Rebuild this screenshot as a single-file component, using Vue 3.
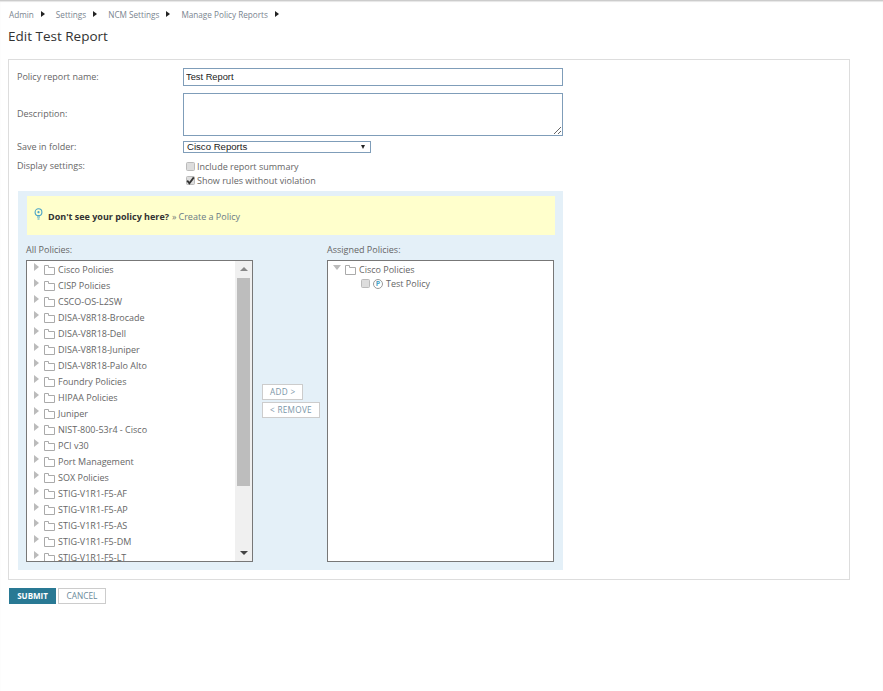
<script setup>
const crumbs = ['Admin', 'Settings', 'NCM Settings', 'Manage Policy Reports']
const policies = ['Cisco Policies', 'CISP Policies', 'CSCO-OS-L2SW', 'DISA-V8R18-Brocade', 'DISA-V8R18-Dell', 'DISA-V8R18-Juniper', 'DISA-V8R18-Palo Alto', 'Foundry Policies', 'HIPAA Policies', 'Juniper', 'NIST-800-53r4 - Cisco', 'PCI v30', 'Port Management', 'SOX Policies', 'STIG-V1R1-F5-AF', 'STIG-V1R1-F5-AP', 'STIG-V1R1-F5-AS', 'STIG-V1R1-F5-DM', 'STIG-V1R1-F5-LT']
</script>

<template>
  <div class="page">
    <nav class="crumbs">
      <span v-for="c in crumbs" :key="c" class="crumb">{{ c }}<i class="crumb-arrow"></i></span>
    </nav>
    <h1 class="title">Edit Test Report</h1>
    <section class="panel">
      <div class="row row-name">
        <label class="label">Policy report name:</label>
        <input class="field name" value="Test Report" />
      </div>
      <div class="row row-desc">
        <label class="label label-desc">Description:</label>
        <textarea class="field desc"></textarea>
      </div>
      <div class="row row-folder">
        <label class="label">Save in folder:</label>
        <div class="select">Cisco Reports<i class="select-caret"></i></div>
      </div>
      <div class="row row-display">
        <label class="label">Display settings:</label>
        <div class="checks">
          <div class="check"><span class="box"></span>Include report summary</div>
          <div class="check">
            <span class="box">
              <svg width="9" height="9" viewBox="0 0 9 9"><path d="M1.2 4.6 3.4 7.2 7.8 1.4" fill="none" stroke="#333" stroke-width="1.8" /></svg>
            </span>Show rules without violation
          </div>
        </div>
      </div>
      <div class="chooser">
        <div class="hint">
          <svg class="bulb" width="9" height="12" viewBox="0 0 9 12">
            <circle cx="4.5" cy="4.2" r="3.4" fill="none" stroke="#4aa3c7" stroke-width="1.1" />
            <circle cx="4.5" cy="4.2" r="1.1" fill="#4aa3c7" />
            <path d="M3 9h3M3.5 11h2" stroke="#4aa3c7" stroke-width="1" />
          </svg>
          <b>Don't see your policy here?</b><span class="raquo">»</span><span class="hint-link">Create a Policy</span>
        </div>
        <div class="columns">
          <div class="col">
            <div class="col-label">All Policies:</div>
            <div class="list">
              <div class="tree">
                <div v-for="p in policies" :key="p" class="node">
                  <i class="tri"></i>
                  <svg class="folder" width="11" height="10" viewBox="0 0 11 10"><path d="M.5 9.5V.5h4v2h6v7z" fill="#fff" stroke="#aaa" /></svg>
                  <span>{{ p }}</span>
                </div>
              </div>
              <div class="scrollbar">
                <i class="arrow-up"></i>
                <div class="track"><div class="thumb"></div></div>
                <i class="arrow-down"></i>
              </div>
            </div>
          </div>
          <div class="moves">
            <button class="move">ADD &gt;</button>
            <button class="move">&lt; REMOVE</button>
          </div>
          <div class="col">
            <div class="col-label">Assigned Policies:</div>
            <div class="list">
              <div class="tree">
                <div class="node">
                  <i class="tri-open"></i>
                  <svg class="folder" width="11" height="10" viewBox="0 0 11 10"><path d="M.5 9.5V.5h4v2h6v7z" fill="#fff" stroke="#aaa" /></svg>
                  <span>Cisco Policies</span>
                </div>
                <div class="leaf">
                  <span class="box leaf-box"></span>
                  <span class="p-icon">P</span>
                  <span>Test Policy</span>
                </div>
              </div>
            </div>
          </div>
        </div>
      </div>
    </section>
    <div class="actions">
      <button class="submit">SUBMIT</button>
      <button class="cancel">CANCEL</button>
    </div>
  </div>
</template>

<style>
html, body { margin: 0; background: #fff; }
</style>

<style scoped>
.page {
  height: 691px;
  box-sizing: border-box;
  overflow: hidden;
  font-family: "Open Sans", "DejaVu Sans", sans-serif;
  font-size: 9px;
  color: #666;
  border-top: 1px solid #ccc;
  box-shadow: inset 0 1px 1px #e6e6e6;
  padding: 0 33px 0 8px;
}
.crumbs {
  display: flex;
  gap: 11px;
  height: 25px;
  align-items: center;
  padding: 1px 0 0 1px;
  box-sizing: border-box;
  font-size: 8.2px;
  color: #7a8590;
}
.crumb { display: flex; align-items: center; gap: 7px; white-space: nowrap; }
.crumb-arrow {
  width: 0; height: 0;
  border-left: 4px solid #222;
  border-top: 3px solid transparent;
  border-bottom: 3px solid transparent;
}
.title {
  margin: 0;
  height: 33px;
  font-size: 13.5px;
  line-height: 21px;
  font-weight: 400;
  color: #333;
}
.panel {
  width: 842px;
  height: 521px;
  box-sizing: border-box;
  border: 1px solid #ddd;
  padding: 8px 9px 0 8px;
}
.row { display: flex; }
.label { width: 166px; flex: none; color: #666; line-height: 18px; }
.row-name { height: 25px; }
.row-desc { height: 48px; }
.label-desc { padding-top: 12px; }
.row-folder { height: 12px; margin-bottom: 4px; align-items: center; }
.row-display { height: 34px; }
.field {
  box-sizing: border-box;
  width: 380px;
  margin: 0;
  border: 1px solid #7f9db9;
  border-radius: 0;
  outline: none;
  font-family: "Liberation Sans", Arial, sans-serif;
  font-size: 9.3px;
  color: #222;
  background: #fff;
}
.name { height: 18px; padding: 0 2px; }
.desc { height: 43px; display: block; resize: both; }
.select {
  position: relative;
  box-sizing: border-box;
  width: 188px;
  height: 12px;
  border: 1px solid #7f9db9;
  padding-left: 3px;
  font-family: "Liberation Sans", Arial, sans-serif;
  font-size: 9.6px;
  line-height: 10px;
  color: #222;
}
.select-caret {
  position: absolute;
  right: 5px;
  top: 3px;
  width: 0; height: 0;
  border-top: 4px solid #222;
  border-left: 2.5px solid transparent;
  border-right: 2.5px solid transparent;
}
.checks { padding: 2px 0 0 3px; }
.check { display: flex; align-items: center; gap: 2px; height: 14px; }
.box {
  display: inline-flex;
  align-items: center;
  justify-content: center;
  box-sizing: border-box;
  width: 9px; height: 9px;
  background: #ddd;
  border: 1px solid #bbb;
  border-radius: 1.5px;
  flex: none;
}
.box svg { flex: none; }
.chooser {
  width: 545px;
  height: 379px;
  box-sizing: border-box;
  margin-left: 1px;
  padding: 5px 8px 0 8px;
  background: #e4f0f8;
}
.hint {
  display: flex;
  align-items: center;
  height: 39px;
  width: 528px;
  margin-left: 1px;
  box-sizing: border-box;
  padding: 1px 0 0 7px;
  background: #ffffcc;
  color: #333;
}
.bulb { margin-right: 5px; margin-top: -5px; }
.hint b { font-weight: 700; }
.raquo { margin: 0 2px 0 3px; color: #777; }
.hint-link { color: #6b7b85; }
.columns { display: flex; margin-top: 7px; }
.col-label { height: 18px; line-height: 15px; color: #666; }
.col { width: 227px; flex: none; }
.list {
  display: flex;
  box-sizing: border-box;
  width: 227px;
  height: 302px;
  border: 1px solid #777;
  background: #fff;
}
.tree { flex: 1; min-width: 0; overflow: hidden; }
.node { display: flex; align-items: center; height: 16px; white-space: nowrap; color: #666; }
.tri {
  width: 0; height: 0;
  margin: -4px 6px 0 7px;
  border-left: 5px solid #bbb;
  border-top: 4px solid transparent;
  border-bottom: 4px solid transparent;
}
.tri-open {
  width: 0; height: 0;
  margin: -4px 5px 0 5px;
  border-top: 5px solid #bbb;
  border-left: 4px solid transparent;
  border-right: 4px solid transparent;
}
.folder { margin-right: 3px; flex: none; margin-top: 2px; margin-left: -1px; }
.leaf { display: flex; align-items: center; height: 13px; padding-left: 33px; color: #666; }
.leaf-box { margin-right: 3px; }
.p-icon {
  display: inline-flex;
  align-items: center;
  justify-content: center;
  box-sizing: border-box;
  width: 10px; height: 10px;
  margin-right: 3px;
  border: 1px solid #999;
  border-radius: 50%;
  font-size: 7px;
  font-weight: 700;
  color: #4aa3c7;
}
.scrollbar {
  width: 17px;
  flex: none;
  display: flex;
  flex-direction: column;
  align-items: center;
  background: #f0f0f0;
}
.arrow-up, .arrow-down { width: 0; height: 0; border-left: 4px solid transparent; border-right: 4px solid transparent; flex: none; }
.arrow-up { margin-top: 6px; border-bottom: 4px solid #888; }
.arrow-down { margin-bottom: 6px; border-top: 4px solid #444; }
.track { flex: 1; width: 100%; padding-top: 7px; box-sizing: border-box; }
.thumb { width: 13px; height: 208px; margin: 0 auto; background: #bdbdbd; }
.moves {
  width: 74px;
  flex: none;
  display: flex;
  flex-direction: column;
  align-items: flex-start;
  gap: 2px;
  padding: 142px 0 0 9px;
  box-sizing: border-box;
}
.move {
  height: 16px;
  padding: 0 7px;
  border: 1px solid #ccc;
  background: #fff;
  font-family: inherit;
  font-size: 8.2px;
  letter-spacing: 0.3px;
  line-height: 14px;
  color: #7a96a8;
  white-space: nowrap;
}
.actions { display: flex; gap: 2px; margin: 8px 0 0 1px; }
.submit, .cancel {
  box-sizing: border-box;
  height: 16px;
  padding: 0;
  font-family: inherit;
  font-size: 8px;
  line-height: 14px;
}
.submit { width: 47px; border: 0; background: #297994; color: #fff; font-weight: 700; }
.cancel { width: 48px; border: 1px solid #ccc; background: #fff; color: #6b8a9a; font-size: 8.3px; }
</style>
